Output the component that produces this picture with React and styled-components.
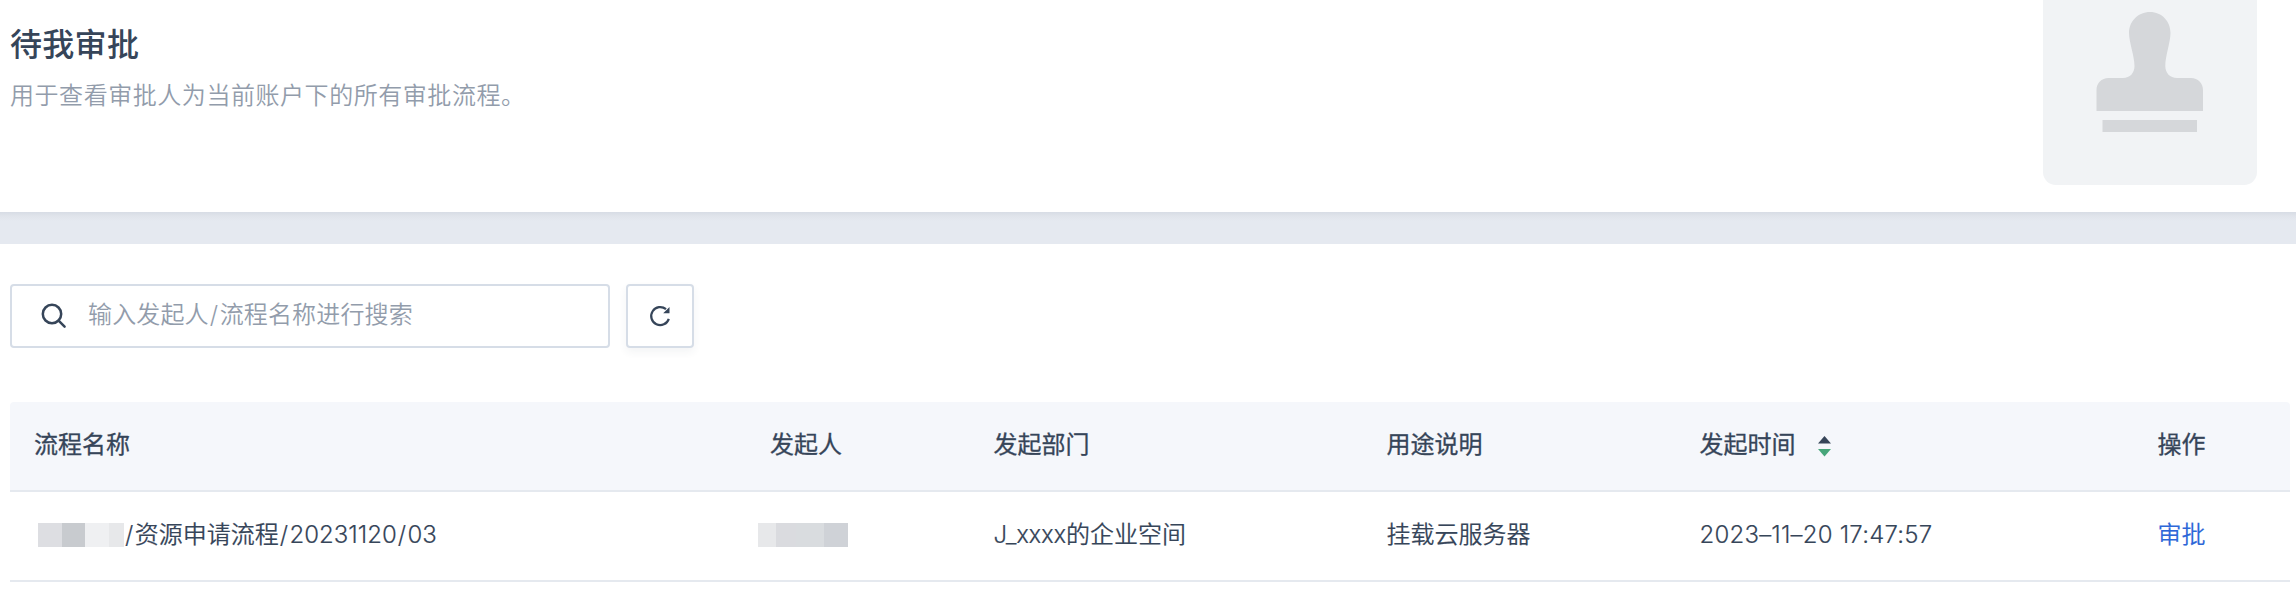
import React from "react";
import styled, { createGlobalStyle } from "styled-components";

const GlobalStyle = createGlobalStyle`
  * { box-sizing: border-box; }
  body {
    margin: 0;
    background: #fff;
    color: #364559;
    font-family: Inter, "Noto Sans CJK SC", sans-serif;
    font-size: 24px;
    font-weight: 350;
    overflow: hidden;
  }
`;

const Page = styled.div`
  width: 2296px;
  height: 592px;
  overflow: hidden;
`;

const Header = styled.header`
  display: flex;
  justify-content: space-between;
  height: 212px;
  padding: 0 39px 0 10px;
`;

const Title = styled.h1`
  margin: 21px 0 0;
  font-size: 32px;
  line-height: 48px;
  font-weight: 500;
  letter-spacing: 0.3px;
`;

const Description = styled.p`
  margin: 9px 0 0;
  line-height: 36px;
  letter-spacing: 0.55px;
  color: #929cab;
`;

const StampCard = styled.div`
  width: 214px;
  height: 185px;
  border-radius: 0 0 13px 13px;
  background: #f1f3f5;
`;

const Divider = styled.div`
  height: 32px;
  background: linear-gradient(#d7dce5 0, #e0e4eb 4px, #e5e9f0 9px);
`;

const Toolbar = styled.div`
  display: flex;
  gap: 16px;
  padding: 40px 10px 54px;
`;

const SearchBox = styled.div`
  display: flex;
  align-items: center;
  width: 600px;
  height: 64px;
  padding-left: 28px;
  border: 2px solid #d6dde7;
  border-radius: 4px;
`;

const Placeholder = styled.span`
  margin: -2px 0 0 20px;
  line-height: 36px;
  letter-spacing: 0.15px;
  color: #929cab;
`;

const RefreshButton = styled.button`
  display: flex;
  align-items: center;
  justify-content: center;
  width: 68px;
  height: 64px;
  padding: 0;
  border: 2px solid #d6dde7;
  border-radius: 4px;
  background: #fff;
  box-shadow: 0 4px 8px rgba(54, 69, 89, 0.06);
`;

const Table = styled.div`
  width: 2280px;
  margin-left: 10px;
`;

const Row = styled.div`
  display: grid;
  grid-template-columns: 736px 223.5px 393px 313px 458px 1fr;
  align-items: center;
  height: 90px;
  padding-left: 24px;
  border-bottom: 2px solid #e5e9ef;
  -webkit-text-stroke: 0.15px currentColor;
`;

const HeadRow = styled(Row)`
  background: #f5f7fb;
  font-weight: 400;
  -webkit-text-stroke: 0.3px currentColor;
  border-radius: 4px 4px 0 0;
`;

const Cell = styled.div`
  display: flex;
  align-items: center;
  height: 36px;
  margin-top: -2px;
  line-height: 36px;
  white-space: pre;
  letter-spacing: ${(p) => p.$spacing || "0"};
`;

const Slash = styled.span`
  margin: 0 1.4px 0 1px;
`;

const Latin = styled.span`
  letter-spacing: -0.25px;
`;

const Link = styled.a`
  color: #2d67d8;
`;

const Mask = styled.span`
  display: flex;
  height: 24px;
  margin-left: ${(p) => p.$offset}px;
`;

const MaskBlock = styled.span`
  width: ${(p) => p.$width}px;
  background: ${(p) => p.$tone};
`;

const SortIcon = styled.svg`
  margin: 2px 0 0 22px;
`;

export default function App() {
  return (
    <Page>
      <GlobalStyle />
      <Header>
        <div>
          <Title>待我审批</Title>
          <Description>用于查看审批人为当前账户下的所有审批流程。</Description>
        </div>
        <StampCard>
          <svg width="214" height="185" viewBox="0 0 214 185" fill="#d5d7da">
            <path d="M107 12C95 12 86 21.500 86 33C86 42 91.500 56 91.500 66C91.500 73 87 78 80 78H65.500C58.500 78 53.500 83 53.500 90V111H160V90C160 83 155 78 148 78H134C127 78 122.300 73 122.300 66C122.300 56 127.500 42 127.500 33C127.500 21.500 119 12 107 12Z" />
            <rect x="59.500" y="120" width="94.500" height="12" />
          </svg>
        </StampCard>
      </Header>
      <Divider />
      <Toolbar>
        <SearchBox>
          <svg width="28" height="28" viewBox="0 0 28 28" fill="none" stroke="#364559" strokeWidth="2.500" strokeLinecap="round">
            <circle cx="12" cy="12" r="9.200" />
            <path d="M18.600 18.600L24.600 24.600" />
          </svg>
          <Placeholder>
            输入发起人<Slash>/</Slash>流程名称进行搜索
          </Placeholder>
        </SearchBox>
        <RefreshButton aria-label="刷新">
          <svg width="24" height="24" viewBox="0 0 24 24">
            <path d="M20.800 14.800A9 9 0 1 1 18 5.200" fill="none" stroke="#364559" strokeWidth="2.200" />
            <path d="M21.500 3V9.300H15.200Z" fill="#364559" />
          </svg>
        </RefreshButton>
      </Toolbar>
      <Table>
        <HeadRow>
          <Cell>流程名称</Cell>
          <Cell>发起人</Cell>
          <Cell>发起部门</Cell>
          <Cell>用途说明</Cell>
          <Cell>
            发起时间
            <SortIcon width="13" height="21" viewBox="0 0 13 21">
              <path d="M0 7.500L6.500 0L13 7.500Z" fill="#364559" />
              <path d="M0 13H13L6.500 20.500Z" fill="#47a67a" />
            </SortIcon>
          </Cell>
          <Cell>操作</Cell>
        </HeadRow>
        <Row>
          <Cell>
            <Mask $offset={4}>
              <MaskBlock $width={24} $tone="#dddee2" />
              <MaskBlock $width={23} $tone="#c8cbcf" />
              <MaskBlock $width={24} $tone="#eff0f2" />
              <MaskBlock $width={15} $tone="#e7e8ea" />
            </Mask>
            <span>
              <Slash>/</Slash>资源申请流程<Slash>/</Slash>20231120<Slash>/</Slash>03
            </span>
          </Cell>
          <Cell>
            <Mask $offset={-12}>
              <MaskBlock $width={18} $tone="#e7e8ea" />
              <MaskBlock $width={20} $tone="#dadbdf" />
              <MaskBlock $width={28} $tone="#d9dcdf" />
              <MaskBlock $width={24} $tone="#cfd2d7" />
            </Mask>
          </Cell>
          <Cell>
            <span>
              <Latin>J_xxxx</Latin>的企业空间
            </span>
          </Cell>
          <Cell>挂载云服务器</Cell>
          <Cell $spacing="0.2px">2023–11–20 17:47:57</Cell>
          <Cell>
            <Link>审批</Link>
          </Cell>
        </Row>
      </Table>
    </Page>
  );
}
